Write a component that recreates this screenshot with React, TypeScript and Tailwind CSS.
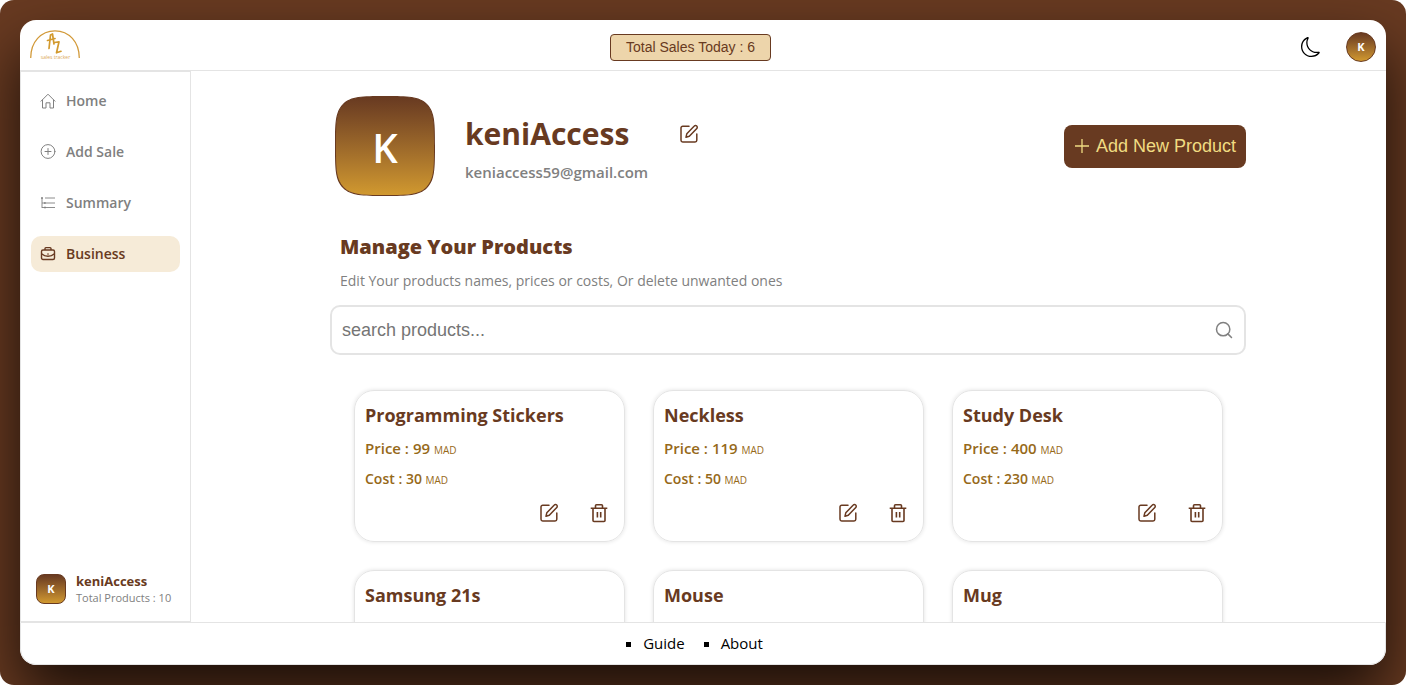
import { BsMoon } from "react-icons/bs"
import { FiSearch } from "react-icons/fi"
import { clsx } from "clsx"

const products = [
    { name: "Programming Stickers", price: 99, cost: 30 },
    { name: "Neckless", price: 119, cost: 50 },
    { name: "Study Desk", price: 400, cost: 230 },
    { name: "Samsung 21s", price: 4200, cost: 3500 },
    { name: "Mouse", price: 80, cost: 45 },
    { name: "Mug", price: 60, cost: 25 },
]

const Logo = () => (
    <svg viewBox="0 0 50 30" className="w-[50px] h-[30px]" fill="none" aria-label="AZ sales tracker">
        <path d="M.7 28C.7 12 11 .8 25 .8S49.300 12 49.300 28" stroke="#d29a3a" strokeWidth="1.300" />
        <g stroke="#d29a2e" strokeWidth="1.700" strokeLinecap="round" strokeLinejoin="round">
            <path d="M19 18.500 20.500 5l2-1 1.500 10M17.500 10.500l7.500-2" />
            <path d="M24.500 12.500l4.500-.7-2.500 11 4.500-1.500" />
        </g>
        <text x="25.500" y="28.500" fontSize="5" textAnchor="middle" fill="#dba95a" fontFamily="Open Sans">sales tracker</text>
    </svg>
)

const HomeIcon = () => (
    <svg viewBox="0 0 16 16" className="size-4" fill="none" stroke="currentColor" strokeLinejoin="round" strokeLinecap="round">
        <path d="M1 8.200 8 1.200l7 7M2.500 7v8H6V9.800h4V15h3.500V7" />
    </svg>
)

const AddIcon = () => (
    <svg viewBox="0 0 16 16" className="size-4" fill="none" stroke="currentColor" strokeLinecap="round">
        <circle cx="8" cy="7.500" r="6.900" />
        <path d="M8 4.500v6M5 7.500h6" />
    </svg>
)

const SummaryIcon = () => (
    <svg viewBox="0 0 16 16" className="size-4" fill="none" stroke="currentColor">
        <path d="M2 3v10M2 8h3M2 12.500h3M5 3h10M6 8h9M6 12.500h9" strokeWidth=".9" />
        <path d="M1.500 2.500h1v1h-1zM4.500 7.500h1v1h-1zM4.500 12h1v1h-1z" />
    </svg>
)

const BriefcaseIcon = () => (
    <svg viewBox="0 0 16 16" className="size-4" fill="none" stroke="currentColor" strokeWidth="1.400" strokeLinejoin="round">
        <rect x="1.500" y="4" width="13" height="9.500" rx="1.500" />
        <path d="M5 4V2.500a.9.9 0 0 1 .9-.9h4.200a.9.900 0 0 1 .9.900V4M1.500 7.800c3.800 3.200 9.200 3.200 13 0" />
        <circle cx="8" cy="8" r=".5" fill="currentColor" strokeWidth=".5" />
    </svg>
)

const EditIcon = () => (
    <svg viewBox="0 0 20 20" className="size-5" fill="none" stroke="currentColor" strokeWidth="1.500" strokeLinejoin="round" strokeLinecap="round">
        <path d="M10 2.200H3.700A1.700 1.700 0 0 0 2 3.900v12.400A1.700 1.700 0 0 0 3.700 18h12.400a1.700 1.700 0 0 0 1.700-1.700V10" />
        <path d="M15.300 2.100a1.500 1.500 0 0 1 2.500 2.300l-7.500 7.900L7 13.200l.8-3.400z" />
    </svg>
)

const TrashIcon = () => (
    <svg viewBox="0 0 20 20" className="size-5" fill="none" stroke="currentColor" strokeWidth="1.600" strokeLinejoin="round">
        <path d="M1.700 5.200h16.600M6.500 5V2.800a1 1 0 0 1 1-1h5a1 1 0 0 1 1 1V5M4 5.200v12.300a1 1 0 0 0 1 1h10a1 1 0 0 0 1-1V5.200M8.400 9v5.600M11.700 9v5.600" />
    </svg>
)

const navItems = [
    { label: "Home", icon: HomeIcon },
    { label: "Add Sale", icon: AddIcon },
    { label: "Summary", icon: SummaryIcon },
    { label: "Business", icon: BriefcaseIcon, active: true },
]

const avatar = "flex shrink-0 items-center justify-center border border-[#683a21] bg-linear-to-b from-[#683a21] to-[#d1992f] text-white"

const Header = () => (
    <header className="flex h-[51px] shrink-0 items-center justify-between border-b border-[#e4e4e4] px-[10px] pt-1">
        <a href="#" className="mb-1"><Logo /></a>
        <p className="rounded border border-[#683a21] bg-[#edd5ab] px-[15px] font-[Liberation_Sans,sans-serif] text-sm leading-[25px] text-[#683a21]">
            Total Sales Today : 6
        </p>
        <div className="flex items-center justify-end gap-[25px]">
            <button type="button" aria-label="Dark mode" className="text-black"><BsMoon className="size-5" /></button>
            <button type="button" className={clsx(avatar, "size-[30px] rounded-full text-[11px] font-bold")}>K</button>
        </div>
    </header>
)

const Sidebar = () => (
    <aside className="flex w-[171px] shrink-0 flex-col justify-between border border-[#e4e4e4] px-[10px] pt-[11px] pb-[15px]">
        <nav className="flex flex-col gap-[15px]">
            {navItems.map(({ label, icon: Icon, active }) => (
                <a
                    key={label}
                    href="#"
                    className={clsx(
                        "flex h-9 items-center gap-[10px] rounded-[10px] px-[9px] text-sm font-semibold",
                        active ? "bg-[#f6ebd8] text-[#683a21]" : "text-[#808080]"
                    )}
                >
                    <Icon />
                    {label}
                </a>
            ))}
        </nav>
        <div className="flex items-center gap-[10px] pl-[5px]">
            <div className={clsx(avatar, "size-[30px] rounded-lg text-[11px] font-bold")}>K</div>
            <div className="whitespace-nowrap">
                <p className="text-[13px] leading-[18px] font-bold text-[#683a21]">keniAccess</p>
                <p className="text-[11px] leading-4 font-medium text-[#808080]">Total Products : 10</p>
            </div>
        </div>
    </aside>
)

type Product = (typeof products)[number]

const ProductCard = ({ name, price, cost }: Product) => (
    <article className="flex h-[152px] flex-col rounded-[20px] border border-[#e4e4e4] px-[10px] pt-3 text-[#966919] shadow-[0_0_4px_rgba(0,0,0,0.12)]">
        <h3 className="text-lg leading-6 font-bold text-[#683a21]">{name}</h3>
        <p className="mt-2 text-[15px] leading-[26px] font-semibold">Price : {price} <span className="text-[10px] font-medium">MAD</span></p>
        <p className="mt-1 text-sm leading-6 font-semibold">Cost : {cost} <span className="text-[10px] font-medium">MAD</span></p>
        <div className="mt-[11px] flex justify-end gap-[30px] pr-[5px] text-[#683a21]">
            <button type="button" aria-label={`Edit ${name}`}><EditIcon /></button>
            <button type="button" aria-label={`Delete ${name}`}><TrashIcon /></button>
        </div>
    </article>
)

const Business = () => (
    <main className="min-w-0 flex-1 overflow-y-auto pt-[25px] pr-px [scrollbar-width:none]">
        <div className="mx-auto w-full max-w-[916px]">
            <section className="flex items-center gap-[30px] pl-[5px]">
                <div className={clsx(avatar, "size-[100px] rounded-[50px] pt-1 text-[40px] font-semibold [corner-shape:squircle]")}>K</div>
                <div className="pt-1">
                    <div className="flex items-center gap-[50px]">
                        <h1 className="text-[30px] leading-[44px] font-bold text-[#683a21]">keniAccess</h1>
                        <button type="button" aria-label="Edit business" className="text-[#683a21]"><EditIcon /></button>
                    </div>
                    <p className="mt-1 text-[15px] leading-6 font-semibold text-[#808080]">keniaccess59@gmail.com</p>
                </div>
                <button type="button" className="ml-auto flex h-[43px] items-center gap-1.5 rounded-lg bg-[#683a21] px-[10px] font-[Liberation_Sans,sans-serif] text-lg text-[#f0dc82]">
                    <svg viewBox="0 0 16 16" className="size-4" stroke="currentColor" strokeWidth="1.300"><path d="M1 8h14M8 1v14" /></svg>
                    Add New Product
                </button>
            </section>

            <section className="pt-9">
                <h2 className="pl-[10px] text-xl leading-[30px] font-black text-[#683a21]">Manage Your Products</h2>
                <p className="mt-[7px] pl-[10px] text-sm leading-6 text-[#808080]">Edit Your products names, prices or costs, Or delete unwanted ones</p>
                <label className="mt-3 flex h-[50px] items-center rounded-[10px] border-2 border-[#e4e4e4] px-[10px] text-[#808080]">
                    <input
                        type="text"
                        aria-label="search products"
                        placeholder="search products..."
                        className="min-w-0 flex-1 font-[Liberation_Sans,sans-serif] text-lg outline-none placeholder:text-[#757575]"
                    />
                    <FiSearch className="size-5" strokeWidth={1.8} />
                </label>
                <div className="mt-[35px] grid grid-cols-3 gap-7 pr-[23px] pl-6">
                    {products.map(product => <ProductCard key={product.name} {...product} />)}
                </div>
            </section>
        </div>
    </main>
)

export default function App() {
    return (
        <div className="h-screen overflow-hidden rounded-[14px] bg-[#683a21] p-5 font-[Open_Sans,sans-serif]">
            <div className="flex h-full flex-col overflow-hidden rounded-2xl bg-white shadow-[0_30px_60px_rgba(0,0,0,0.75)]">
                <Header />
                <div className="flex min-h-0 flex-1">
                    <Sidebar />
                    <Business />
                </div>
                <footer className="flex h-[43px] shrink-0 items-center justify-center rounded-b-2xl border border-[#e4e4e4]">
                    <ul className="flex list-[square] gap-9 text-[15px] text-black">
                        <li><a href="#">Guide</a></li>
                        <li><a href="#">About</a></li>
                    </ul>
                </footer>
            </div>
        </div>
    )
}
